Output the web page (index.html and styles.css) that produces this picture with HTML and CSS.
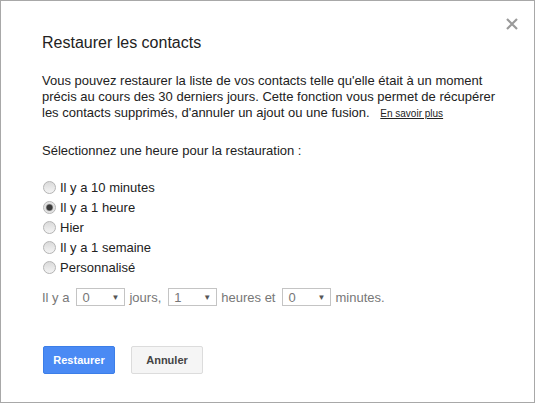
FILE: index.html
```html
<!DOCTYPE html>
<html lang="fr">
<head>
<meta charset="utf-8">
<title>Restaurer les contacts</title>
<link rel="stylesheet" href="styles.css">
</head>
<body>
<div class="dialog">
  <button class="close" aria-label="Fermer">
    <svg width="12" height="12" viewBox="0 0 12 12"><path d="M1 1L11 11M11 1L1 11" stroke="#9a9a9a" stroke-width="2.2" fill="none"/></svg>
  </button>
  <h1 class="title">Restaurer les contacts</h1>
  <p class="desc">Vous pouvez restaurer la liste de vos contacts telle qu'elle était à un moment<br>précis au cours des 30 derniers jours. Cette fonction vous permet de récupérer<br>les contacts supprimés, d'annuler un ajout ou une fusion. <a class="more" href="#">En savoir plus</a></p>
  <p class="prompt">Sélectionnez une heure pour la restauration :</p>
  <ul class="options">
    <li class="option"><span class="radio"></span>Il y a 10 minutes</li>
    <li class="option"><span class="radio checked"></span>Il y a 1 heure</li>
    <li class="option"><span class="radio"></span>Hier</li>
    <li class="option"><span class="radio"></span>Il y a 1 semaine</li>
    <li class="option"><span class="radio"></span>Personnalisé</li>
  </ul>
  <div class="custom">
    <span>Il y a</span>
    <span class="select"><span>0</span><span class="arrow">▼</span></span>
    <span>jours,</span>
    <span class="select"><span>1</span><span class="arrow">▼</span></span>
    <span>heures et</span>
    <span class="select"><span>0</span><span class="arrow">▼</span></span>
    <span>minutes.</span>
  </div>
  <div class="actions">
    <button class="btn primary">Restaurer</button>
    <button class="btn">Annuler</button>
  </div>
</div>
</body>
</html>
```
FILE: styles.css
```css
html, body {
  margin: 0;
  padding: 0;
  background: #fff;
}
body {
  font-family: Arial, "Liberation Sans", sans-serif;
  color: #222;
}
.dialog {
  position: relative;
  box-sizing: border-box;
  width: 535px;
  height: 403px;
  border: 1px solid #a8a8a8;
  padding: 32px 0 0 41px;
}
.close {
  position: absolute;
  top: 16px;
  right: 15px;
  width: 14px;
  height: 14px;
  padding: 1px;
  border: 0;
  background: none;
  display: flex;
  align-items: center;
  justify-content: center;
}
.title {
  margin: 0 0 20px;
  font-size: 16px;
  font-weight: normal;
  line-height: 20px;
  color: #222;
}
.desc {
  margin: 0 0 21px;
  font-size: 13px;
  line-height: 16px;
}
.more {
  font-size: 10px;
  color: #222;
  margin-left: 7px;
  text-decoration: underline;
}
.prompt {
  margin: 0 0 18px;
  font-size: 13px;
  line-height: 16px;
}
.options {
  list-style: none;
  margin: 0;
  padding: 0;
}
.option {
  display: flex;
  align-items: center;
  height: 20px;
  font-size: 13px;
}
.radio {
  box-sizing: border-box;
  width: 13px;
  height: 13px;
  margin: 0 4px 0 1px;
  border-radius: 50%;
  border: 1px solid #b4b4b4;
  background: linear-gradient(#dadada, #f4f4f4);
}
.radio.checked {
  background: radial-gradient(circle, #3a3a3a 0 2.6px, #8a8a8a 3.2px, #dcdcdc 4px, #eeeeee 6px);
}
.custom {
  display: flex;
  align-items: center;
  height: 20px;
  margin-top: 10px;
  font-size: 13px;
  color: #777;
}
.select {
  box-sizing: border-box;
  display: flex;
  align-items: center;
  justify-content: space-between;
  width: 49px;
  height: 18px;
  margin: 0 4px 0 7px;
  padding: 0 5px 0 5px;
  border: 1px solid #c4c4c4;
  color: #777;
  font-size: 13px;
}
.arrow {
  font-size: 8px;
  color: #555;
}
.actions {
  display: flex;
  gap: 16px;
  margin-top: 39px;
  margin-left: 1px;
}
.btn {
  box-sizing: border-box;
  width: 72px;
  height: 28px;
  border-radius: 2px;
  border: 1px solid #dcdcdc;
  background: #f5f5f5;
  color: #444;
  font-family: Arial, "Liberation Sans", sans-serif;
  font-size: 11px;
  font-weight: bold;
  padding: 0;
}
.btn.primary {
  background: #4a8af4;
  border-color: #3c7ee8;
  color: #fff;
}
```
